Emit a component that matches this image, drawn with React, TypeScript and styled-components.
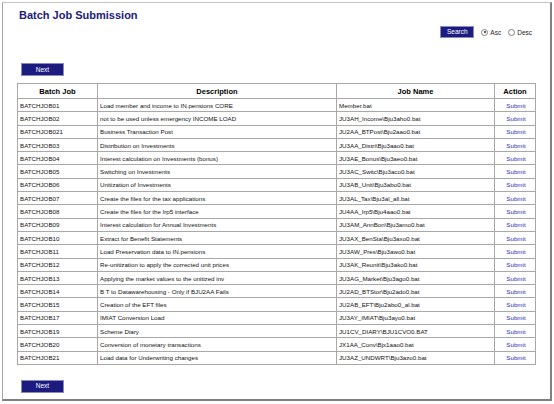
import styled, { createGlobalStyle } from 'styled-components'

const jobs = [
  ['BATCHJOB01', 'Load member and income to IN.pensions CORE', 'Member.bat'],
  ['BATCHJOB02', 'not to be used unless emergency INCOME LOAD', 'JU3AH_Income\\Bju3aho0.bat'],
  ['BATCHJOB021', 'Business Transaction Post', 'JU2AA_BTPost\\Bju2aao0.bat'],
  ['BATCHJOB03', 'Distribution on Investments', 'JU3AA_Distri\\Bju3aao0.bat'],
  ['BATCHJOB04', 'Interest calculation on Investments (bonus)', 'JU3AE_Bonus\\Bju3aeo0.bat'],
  ['BATCHJOB05', 'Switching on Investments', 'JU3AC_Switc\\Bju3aco0.bat'],
  ['BATCHJOB06', 'Unitization of Investments', 'JU3AB_Unit\\Bju3abo0.bat'],
  ['BATCHJOB07', 'Create the files for the tax applications', 'JU3AL_Tax\\Bju3al_all.bat'],
  ['BATCHJOB08', 'Create the files for the Irp5 interface', 'JU4AA_Irp5\\Bju4aao0.bat'],
  ['BATCHJOB09', 'Interest calculation for Annual Investments', 'JU3AM_AnnBon\\Bju3amo0.bat'],
  ['BATCHJOB10', 'Extract for Benefit Statements', 'JU3AX_BenSta\\Bju3axo0.bat'],
  ['BATCHJOB11', 'Load Preservation data to IN.pensions', 'JU3AW_Pres\\Bju3awo0.bat'],
  ['BATCHJOB12', 'Re-unitization to apply the corrected unit prices', 'JU3AK_Reunit\\Bju3ako0.bat'],
  ['BATCHJOB13', 'Applying the market values to the unitized inv', 'JU3AG_Market\\Bju3ago0.bat'],
  ['BATCHJOB14', 'B T to Datawarehousing - Only if BJU2AA Fails', 'JU2AD_BTStor\\Bju2ado0.bat'],
  ['BATCHJOB15', 'Creation of the EFT files', 'JU2AB_EFT\\Bju2abo0_al.bat'],
  ['BATCHJOB17', 'IMIAT Conversion Load', 'JU3AY_IMIAT\\Bju3ayo0.bat'],
  ['BATCHJOB19', 'Scheme Diary', 'JU1CV_DIARY\\BJU1CVO0.BAT'],
  ['BATCHJOB20', 'Conversion of monetary transactions', 'JX1AA_Conv\\Bjx1aao0.bat'],
  ['BATCHJOB21', 'Load data for Underwriting changes', 'JU3AZ_UNDWRT\\Bju3azo0.bat'],
]

export default function App() {
  return (
    <>
      <GlobalStyle />
      <Frame>
        <Title>Batch Job Submission</Title>
        <Toolbar>
          <NavButton>Search</NavButton>
          <RadioLabel>
            <Radio type="radio" name="order" defaultChecked />
            Asc
          </RadioLabel>
          <RadioLabel>
            <Radio type="radio" name="order" />
            Desc
          </RadioLabel>
        </Toolbar>
        <ButtonRow>
          <NavButton $wide>Next</NavButton>
        </ButtonRow>
        <JobTable>
          <colgroup>
            <col style={{ width: 80 }} />
            <col style={{ width: 239 }} />
            <col style={{ width: 158 }} />
            <col style={{ width: 41 }} />
          </colgroup>
          <thead>
            <tr>
              <HeadCell>Batch Job</HeadCell>
              <HeadCell>Description</HeadCell>
              <HeadCell>Job Name</HeadCell>
              <HeadCell>Action</HeadCell>
            </tr>
          </thead>
          <tbody>
            {jobs.map(([id, desc, file]) => (
              <tr key={id}>
                <Cell>{id}</Cell>
                <Cell>{desc}</Cell>
                <Cell>{file}</Cell>
                <Cell $center>
                  <SubmitLink href="#">Submit</SubmitLink>
                </Cell>
              </tr>
            ))}
          </tbody>
        </JobTable>
        <ButtonRow $bottom>
          <NavButton $wide>Next</NavButton>
        </ButtonRow>
      </Frame>
    </>
  )
}

const GlobalStyle = createGlobalStyle`
  body {
    margin: 0;
    background: #ffffff;
    font-family: "Liberation Sans", Arial, sans-serif;
  }
`

const Frame = styled.div`
  box-sizing: border-box;
  width: 550px;
  height: 399px;
  margin: 2px 0 0 2px;
  padding: 6px 14px 0 14px;
  border-left: 1px solid #a4a4a4;
  border-top: 1px solid #c4c4c4;
  border-right: 2px solid #808080;
  border-bottom: 2px solid #808080;
  background: #ffffff;
`

const Title = styled.h1`
  margin: 0 0 0 2px;
  font-size: 11px;
  line-height: 13px;
  font-weight: bold;
  color: #20207a;
`

const Toolbar = styled.div`
  display: flex;
  justify-content: flex-end;
  align-items: center;
  gap: 7px;
  width: 518px;
  margin-top: 4px;
  padding-right: 3px;
  box-sizing: border-box;
`

const NavButton = styled.button<{ $wide?: boolean }>`
  box-sizing: border-box;
  width: ${(p) => (p.$wide ? '43px' : '34px')};
  height: ${(p) => (p.$wide ? '13px' : '12px')};
  padding: 0;
  border: 1px solid #8a8ac0;
  background: #1c1c80;
  color: #ffffff;
  font-family: "Liberation Sans", Arial, sans-serif;
  font-size: 6.5px;
  line-height: 10px;
  cursor: pointer;
`

const RadioLabel = styled.label`
  display: flex;
  align-items: center;
  gap: 2px;
  font-size: 6.5px;
  color: #222222;
`

const Radio = styled.input`
  appearance: none;
  box-sizing: border-box;
  width: 7px;
  height: 7px;
  margin: 0;
  border: 1px solid #808080;
  border-radius: 50%;
  background: #ffffff;
  position: relative;

  &:checked::after {
    content: '';
    position: absolute;
    left: 1.5px;
    top: 1.5px;
    width: 2px;
    height: 2px;
    border-radius: 50%;
    background: #222222;
  }
`

const ButtonRow = styled.div<{ $bottom?: boolean }>`
  margin: ${(p) => (p.$bottom ? '15px 0 0 4px' : '25px 0 7px 4px')};
  height: 13px;
  display: flex;
`

const JobTable = styled.table`
  width: 518px;
  table-layout: fixed;
  border-collapse: collapse;
  border: 1px solid #a0a0a0;
  font-size: 6.2px;
  color: #111111;
`

const HeadCell = styled.th`
  height: 14px;
  padding: 0;
  border: 1px solid #a8a8a8;
  font-size: 7.5px;
  font-weight: bold;
  text-align: center;
  color: #000000;
`

const Cell = styled.td<{ $center?: boolean }>`
  height: 13.3px;
  padding: 0 0 0 2px;
  border: 1px solid #a8a8a8;
  text-align: ${(p) => (p.$center ? 'center' : 'left')};
  white-space: nowrap;
  overflow: hidden;
  box-sizing: border-box;
`

const SubmitLink = styled.a`
  color: #2c2cb8;
  text-decoration: none;
`
